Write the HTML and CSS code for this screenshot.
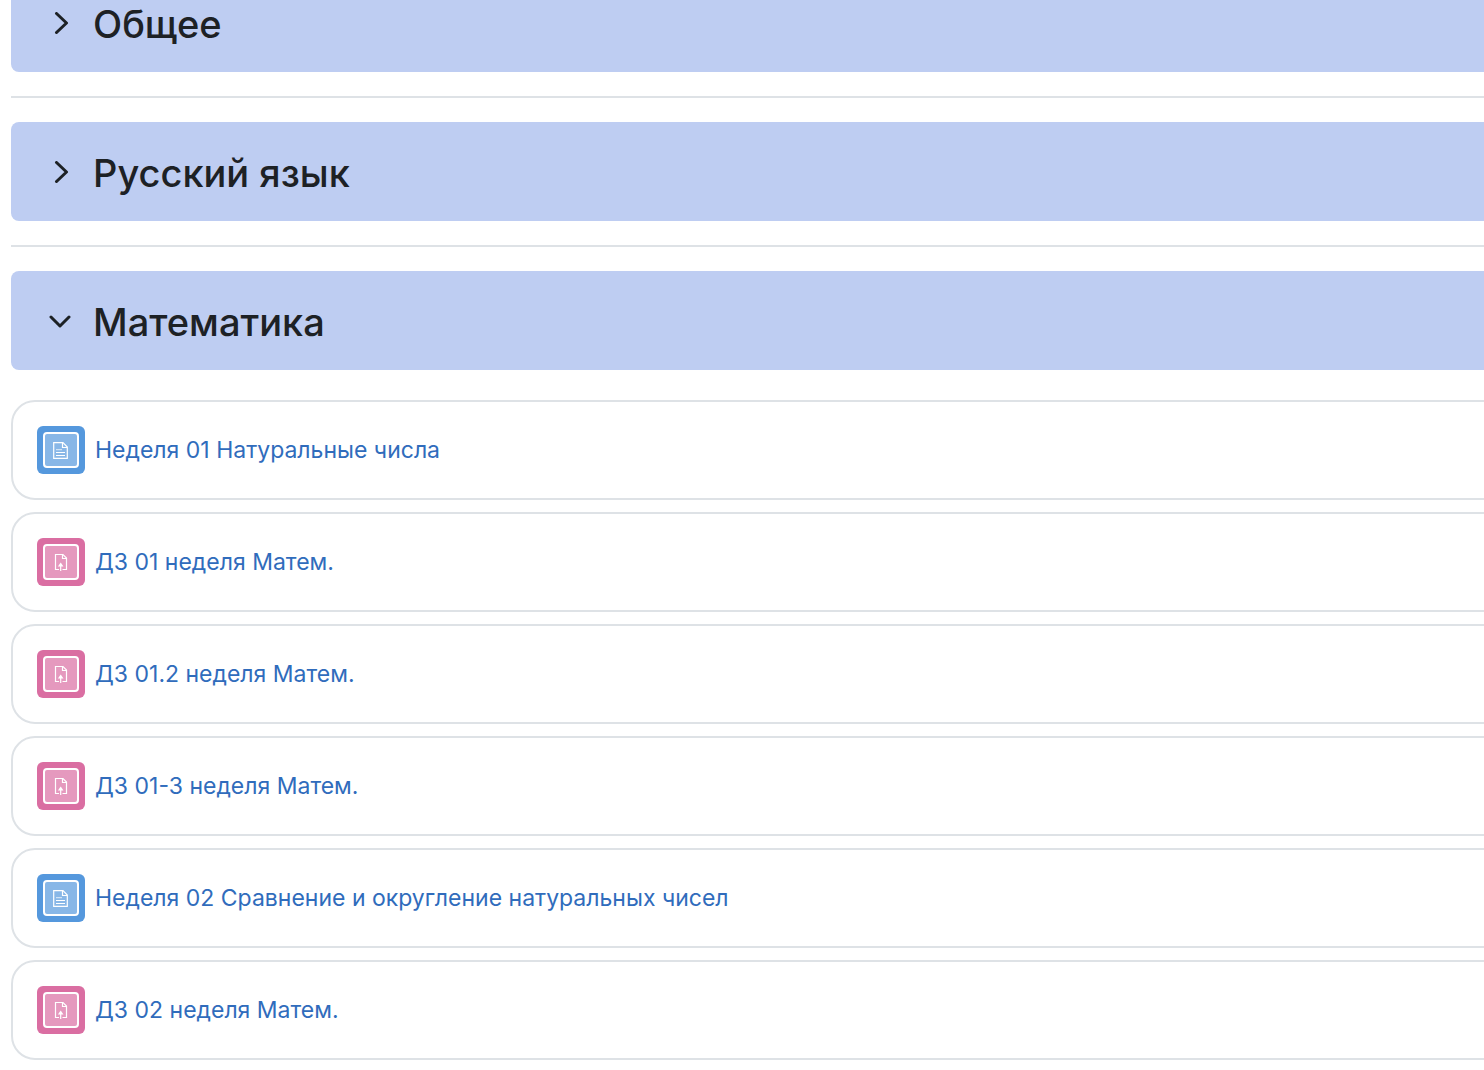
FILE: index.html
```
<!DOCTYPE html>
<html lang="ru">
<head>
	<meta charset="UTF-8">
	<title>Курс</title>
	<link rel="stylesheet" href="styles.css">
</head>
<body>
	<svg class="sprite" aria-hidden="true">
		<symbol id="right" viewBox="0 0 24 24">
			<path d="M7.5 1.5L17.5 11L7.5 20.5"/>
		</symbol>
		<symbol id="down" viewBox="0 0 24 24">
			<path d="M2 7L11 16L20 7"/>
		</symbol>
		<symbol id="page" viewBox="0 0 48 48">
			<rect class="frame" x="7" y="7" width="34" height="34" rx="3"/>
			<path d="M16.7 16.7H26L30.3 21V32.3H16.7Z"/>
			<path d="M25.5 17V21.5H30"/>
			<path class="faint" d="M19 23.7H25"/>
			<path d="M19 26.5H28M19 29.5H28"/>
		</symbol>
		<symbol id="assign" viewBox="0 0 48 48">
			<rect class="frame" x="7" y="7" width="34" height="34" rx="3"/>
			<path d="M22 31.5H18.5V16.5H26L29.5 20V31.5H25.5"/>
			<path d="M25.5 16.8V20.5H29.3"/>
			<path d="M23.7 33V27"/>
			<path class="arrow" d="M23.7 24.5L26.5 28.5H20.9Z"/>
		</symbol>
	</svg>
	<main class="course">
		<section class="section">
			<h3 class="section-head">
				<button class="toggle" type="button" aria-label="Развернуть" aria-expanded="false"><svg><use href="#right"/></svg></button>
				<span>Общее</span>
			</h3>
		</section>
		<section class="section">
			<h3 class="section-head">
				<button class="toggle" type="button" aria-label="Развернуть" aria-expanded="false"><svg><use href="#right"/></svg></button>
				<span>Русский язык</span>
			</h3>
		</section>
		<section class="section">
			<h3 class="section-head">
				<button class="toggle" type="button" aria-label="Свернуть" aria-expanded="true"><svg><use href="#down"/></svg></button>
				<span>Математика</span>
			</h3>
			<ul class="activities">
				<li class="activity">
					<svg class="icon page"><use href="#page"/></svg>
					<a href="#">Неделя 01 Натуральные числа</a>
				</li>
				<li class="activity">
					<svg class="icon assign"><use href="#assign"/></svg>
					<a href="#">ДЗ 01 неделя Матем.</a>
				</li>
				<li class="activity">
					<svg class="icon assign"><use href="#assign"/></svg>
					<a href="#">ДЗ 01.2 неделя Матем.</a>
				</li>
				<li class="activity">
					<svg class="icon assign"><use href="#assign"/></svg>
					<a href="#">ДЗ 01-3 неделя Матем.</a>
				</li>
				<li class="activity">
					<svg class="icon page"><use href="#page"/></svg>
					<a href="#">Неделя 02 Сравнение и округление натуральных чисел</a>
				</li>
				<li class="activity">
					<svg class="icon assign"><use href="#assign"/></svg>
					<a href="#">ДЗ 02 неделя Матем.</a>
				</li>
			</ul>
		</section>
	</main>
</body>
</html>
```

FILE: styles.css
```
*{
	margin: 0;
	padding: 0;
	box-sizing: border-box;
}
body{
	font-family: Inter, "Noto Sans", sans-serif;
	color: #1d2125;
	background: #fff;
	overflow-x: hidden;
}
li{
	list-style: none;
}
.sprite{
	display: none;
}
.course{
	margin: -27px -30px 10px 11px;
}
.section + .section{
	margin-top: 24px;
	padding-top: 24px;
	border-top: 2px solid #dee2e6;
}
.section-head{
	display: flex;
	align-items: center;
	gap: 20px;
	padding: 25px 38px 22px;
	border-radius: 8px;
	background: #becdf2;
	font-size: 38px;
	font-weight: 500;
	line-height: 52px;
}
.toggle{
	width: 24px;
	height: 24px;
	border: 0;
	background: none;
	cursor: pointer;
}
.toggle svg{
	display: block;
	width: 24px;
	height: 24px;
	fill: none;
	stroke: #1d2125;
	stroke-width: 3;
	stroke-linecap: round;
	stroke-linejoin: round;
}
.activities{
	display: flex;
	flex-direction: column;
	gap: 12px;
	margin-top: 30px;
}
.activity{
	display: flex;
	align-items: center;
	gap: 10px;
	padding: 24px;
	border: 2px solid #dee2e6;
	border-radius: 24px;
}
.activity a{
	color: #306cbc;
	font-size: 23px;
	line-height: 32px;
	text-decoration: none;
}
.activity a:hover{
	text-decoration: underline;
}
.icon{
	width: 48px;
	height: 48px;
	border-radius: 6px;
	fill: none;
	stroke: #fff;
	stroke-width: 1.2;
}
.icon.page{
	background: #5598dd;
}
.icon.assign{
	background: #da6ea2;
}
.frame{
	fill: rgba(255,255,255,0.3);
	stroke-width: 2;
}
.faint{
	opacity: 0.6;
}
.arrow{
	fill: #fff;
	stroke: none;
}
```
